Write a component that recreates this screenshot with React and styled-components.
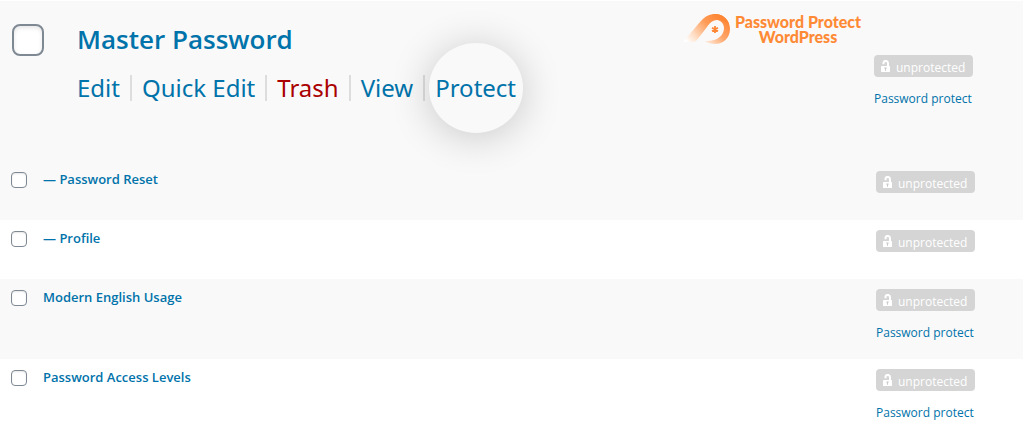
import React from "react";
import styled, { createGlobalStyle, css } from "styled-components";

const GlobalStyle = createGlobalStyle`
  *, *::before, *::after { box-sizing: border-box; }
  body {
    margin: 0;
    background: #fff;
    color: #0073aa;
    font-family: "Open Sans", "Noto Sans", sans-serif;
    font-size: 13px;
    line-height: 20px;
  }
`;

const PagesTable = styled.table`
  width: 100%;
  margin-top: 1px;
  border-collapse: collapse;
  table-layout: fixed;
`;

const Row = styled.tr`
  height: ${(p) => (p.$featured ? 160 : p.$tall ? 80 : 59)}px;
  background: ${(p) => (p.$shaded ? "#f9f9f9" : "#fff")};
`;

const CheckColumn = styled.col`
  width: 43px;
`;

const StatusColumn = styled.col`
  width: 147px;
`;

const FeatureCell = styled.td`
  padding: 0;
`;

const CheckCell = styled.td`
  padding: 11px 0 0 11px;
  vertical-align: top;
`;

const TitleCell = styled.td`
  padding: 8px 0 0;
  vertical-align: top;
`;

const StatusCell = styled.td`
  padding: 10px 0 0;
  vertical-align: top;
`;

const Checkbox = styled.input`
  appearance: none;
  display: block;
  width: 16px;
  height: 16px;
  margin: 0;
  background: #fff;
  border: 1px solid #7e8993;
  border-radius: 4px;
  box-shadow: inset 0 1px 2px rgba(0, 0, 0, 0.1);
  ${(p) =>
    p.$large &&
    css`
      width: 32px;
      height: 32px;
      border-width: 2px;
      border-radius: 8px;
      box-shadow: inset 0 2px 4px rgba(0, 0, 0, 0.1);
    `}
`;

const PageLink = styled.a`
  color: #0073aa;
  font-weight: 600;
  text-decoration: none;
`;

const Feature = styled.div`
  display: flex;
  align-items: flex-start;
  height: 160px;
`;

const FeatureCheck = styled.div`
  flex: none;
  width: 77px;
  padding: 23px 0 0 12px;
`;

const FeatureBody = styled.div`
  flex: 1;
  padding-top: 20px;
`;

const FeatureTitle = styled(PageLink)`
  display: block;
  font-size: 26px;
  line-height: 36px;
`;

const Actions = styled.div`
  display: flex;
  align-items: center;
  gap: 10px;
  margin-top: 12px;
  font-family: "Noto Sans", "Open Sans", sans-serif;
  font-size: 24px;
  line-height: 38px;
`;

const Action = styled.a`
  color: ${(p) => (p.$danger ? "#a00" : "#0073aa")};
  text-decoration: none;
  white-space: nowrap;
`;

const Divider = styled.span`
  flex: none;
  width: 2px;
  height: 26px;
  background: #ddd;
`;

const Spotlight = styled(Action)`
  position: relative;
  z-index: 0;

  &::before {
    content: "";
    position: absolute;
    z-index: -1;
    left: 50%;
    top: 50%;
    width: 94px;
    height: 90px;
    transform: translate(-50%, -50%);
    border-radius: 50%;
    background: #f9f9f9;
    box-shadow: 0 4px 40px rgba(0, 0, 0, 0.2);
  }
`;

const FeatureAside = styled.div`
  flex: none;
  display: flex;
  flex-direction: column;
  width: 340px;
  padding: 11px 0 0;
`;

const Brand = styled.div`
  display: flex;
  align-items: center;
  height: 33px;
`;

const BrandName = styled.div`
  width: 134px;
  color: #ff8a36;
  font-family: Lato, sans-serif;
  font-size: 16px;
  font-weight: 900;
  line-height: 15px;
  text-align: center;
`;

const FeatureStatus = styled.div`
  margin: 10px 0 0 191px;
`;

const Badge = styled.span`
  display: flex;
  align-items: center;
  gap: 6px;
  width: 99px;
  height: 22px;
  padding: 0 6px;
  border-radius: 4px;
  background: #d5d5d5;
  color: #fff;
  font-size: 12px;
  line-height: 20px;
`;

const BadgeText = styled.span`
  padding-top: 3px;
`;

const LockDrawing = styled.svg`
  flex: none;
`;

const ProtectLink = styled.a`
  display: block;
  width: max-content;
  margin-top: 12px;
  color: #0073aa;
  font-size: 12px;
  text-decoration: none;
`;

function UnlockIcon() {
  return (
    <LockDrawing width="10" height="13" viewBox="0 0 10 13" aria-hidden="true">
      <path d="M3.500 4.200V3.200a2.200 2.200 0 0 1 4.500 0V7" fill="none" stroke="#fff" strokeWidth="2" />
      <rect x="1" y="6" width="9" height="6" rx="0.600" fill="#fff" />
      <path d="M4.400 7.500h2.200v1.300H6v2H5v-2h-.6z" fill="#c9c9c9" />
    </LockDrawing>
  );
}

function BrandMark() {
  return (
    <svg width="48" height="34" viewBox="0 0 48 34" aria-hidden="true">
      <defs>
        <linearGradient id="tail" gradientUnits="userSpaceOnUse" x1="36" y1="3" x2="4" y2="30">
          <stop offset="0" stopColor="#ff8634" />
          <stop offset="0.35" stopColor="#ff9a55" />
          <stop offset="0.75" stopColor="#ffdcc2" />
          <stop offset="1" stopColor="#fff" />
        </linearGradient>
        <linearGradient id="hook" gradientUnits="userSpaceOnUse" x1="44" y1="8" x2="22" y2="32">
          <stop offset="0" stopColor="#ff8634" />
          <stop offset="0.5" stopColor="#ffa76c" />
          <stop offset="1" stopColor="#fff3ea" />
        </linearGradient>
      </defs>
      <path
        d="M32 2C41 2 47 9 47 17C47 26 40 32 32 32C28 32 24 31 22 29C33 30 41 24 41 16C41 11 37 8 32 7Z"
        fill="url(#hook)"
      />
      <path
        d="M0 30L17 10C22 4 27 2 32 2C39 2 44 6 46 12C42 9 38 8 34 8C29 8 26 12 24 15L14 28C12 30 10 30 8 30Z"
        fill="url(#tail)"
      />
      <path
        d="M32 14v7M29 15.750l6 3.500M35 15.750l-6 3.500"
        stroke="#ff8634"
        strokeWidth="1.800"
      />
    </svg>
  );
}

function Status({ withLink }) {
  return (
    <>
      <Badge>
        <UnlockIcon />
        <BadgeText>unprotected</BadgeText>
      </Badge>
      {withLink && <ProtectLink href="#protect">Password protect</ProtectLink>}
    </>
  );
}

function FeaturedPage() {
  return (
    <Feature>
      <FeatureCheck>
        <Checkbox type="checkbox" $large aria-label="Select Master Password" />
      </FeatureCheck>
      <FeatureBody>
        <FeatureTitle href="#master">Master Password</FeatureTitle>
        <Actions>
          <Action href="#edit">Edit</Action>
          <Divider />
          <Action href="#quick-edit">Quick Edit</Action>
          <Divider />
          <Action href="#trash" $danger>Trash</Action>
          <Divider />
          <Action href="#view">View</Action>
          <Divider />
          <Spotlight href="#protect">Protect</Spotlight>
        </Actions>
      </FeatureBody>
      <FeatureAside>
        <Brand>
          <BrandMark />
          <BrandName>Password Protect WordPress</BrandName>
        </Brand>
        <FeatureStatus>
          <Status withLink />
        </FeatureStatus>
      </FeatureAside>
    </Feature>
  );
}

const pages = [
  { title: "— Password Reset", shaded: true },
  { title: "— Profile" },
  { title: "Modern English Usage", shaded: true, link: true },
  { title: "Password Access Levels", link: true },
];

export default function App() {
  return (
    <>
      <GlobalStyle />
      <PagesTable>
        <colgroup>
          <CheckColumn />
          <col />
          <StatusColumn />
        </colgroup>
        <tbody>
          <Row $featured $shaded>
            <FeatureCell colSpan={3}>
              <FeaturedPage />
            </FeatureCell>
          </Row>
          {pages.map((page) => (
            <Row key={page.title} $shaded={page.shaded} $tall={page.link}>
              <CheckCell>
                <Checkbox type="checkbox" aria-label={`Select ${page.title}`} />
              </CheckCell>
              <TitleCell>
                <PageLink href="#page">{page.title}</PageLink>
              </TitleCell>
              <StatusCell>
                <Status withLink={page.link} />
              </StatusCell>
            </Row>
          ))}
        </tbody>
      </PagesTable>
    </>
  );
}
